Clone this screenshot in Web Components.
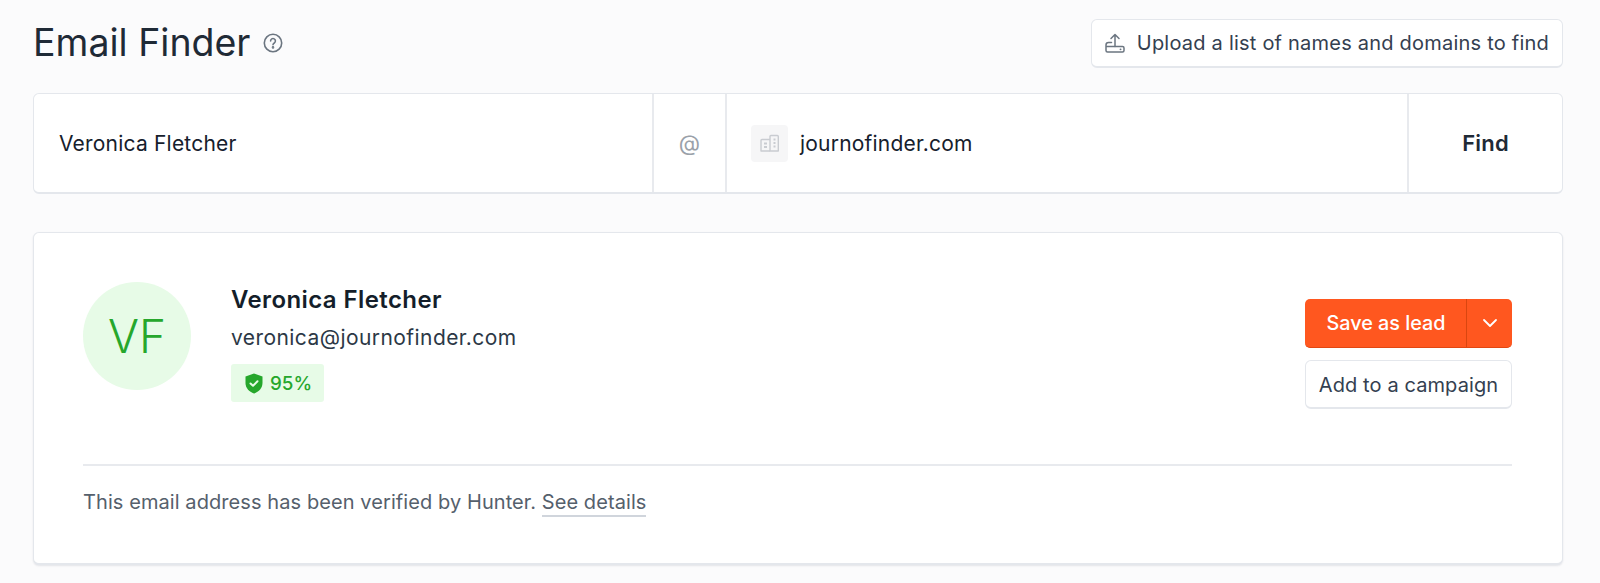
<!DOCTYPE html>
<html>
<head>
<meta charset="utf-8">
<style>
html, body { margin: 0; height: 583px; overflow: hidden; background: #fbfbfc; }
body { font-family: Inter, "Liberation Sans", sans-serif; color: #1f2a36; }
</style>
</head>
<body>
<finder-page>
    <finder-header></finder-header>
    <search-bar name="Veronica Fletcher" domain="journofinder.com"></search-bar>
    <result-card name="Veronica Fletcher" email="veronica@journofinder.com" initials="VF" score="95%"></result-card>
</finder-page>

<script>
class FinderPage extends HTMLElement {
    constructor() {
        super();
        this.attachShadow({ mode: "open" });
        this.shadowRoot.innerHTML = `
            <style>
                :host {
                    display: flex;
                    flex-direction: column;
                    box-sizing: border-box;
                    width: 1600px;
                    padding: 19px 37px 0 33px;
                }
            </style>
            <slot></slot>
        `;
    }
}

class FinderHeader extends HTMLElement {
    constructor() {
        super();
        this.attachShadow({ mode: "open" });
        this.shadowRoot.innerHTML = `
            <style>
                :host {
                    display: flex;
                    justify-content: space-between;
                    align-items: center;
                    height: 49px;
                    margin-bottom: 25px;
                }
                .title { display: flex; align-items: center; gap: 13px; margin-top: -2px; }
                h1 { margin: 0; font-size: 37.500px; font-weight: 400; line-height: 48px; color: #1f2a36; }
                .upload {
                    display: flex;
                    align-items: center;
                    gap: 12px;
                    box-sizing: border-box;
                    height: 49px;
                    padding: 0 13px;
                    background: #fff;
                    border: 1px solid #e4e7ec;
                    border-bottom-width: 2px;
                    border-radius: 6px;
                    font-size: 20px;
                    letter-spacing: 0.22px;
                    color: #344050;
                }
                svg { display: block; }
            </style>
            <div class="title">
                <h1>Email Finder</h1>
                <svg width="20" height="20" viewBox="0 0 20 20" fill="none" stroke="#6b7580" stroke-width="1.6" stroke-linecap="round">
                    <circle cx="10" cy="10" r="8.700"/>
                    <path d="M7.600 8a2.400 2.400 0 1 1 3.700 2c-.9.6-1.300 1-1.300 1.800"/>
                    <circle cx="10" cy="14.400" r=".5" fill="#6b7580"/>
                </svg>
            </div>
            <div class="upload">
                <svg width="20" height="21" viewBox="0 0 20 21" fill="none" stroke="#6b7580" stroke-width="1.5" stroke-linecap="round" stroke-linejoin="round">
                    <path d="M10 13.500V1.500M6 5.500l4-4 4 4"/>
                    <path d="M6.500 9.500H3.500A2.500 2.500 0 0 0 1 12v5.500A1.500 1.500 0 0 0 2.500 19h15a1.500 1.500 0 0 0 1.500-1.500v-2.500a1.500 1.500 0 0 0-1.500-1.500H1.500"/>
                    <path d="M15.500 16.300h.1" stroke-width="1.800"/>
                </svg>
                <span>Upload a list of names and domains to find</span>
            </div>
        `;
    }
}

class SearchBar extends HTMLElement {
    constructor() {
        super();
        this.attachShadow({ mode: "open" });
        this.shadowRoot.innerHTML = `
            <style>
                :host {
                    display: grid;
                    grid-template-columns: 618px 75px 1fr 155px;
                    box-sizing: border-box;
                    height: 101px;
                    margin-bottom: 38px;
                    background: #fff;
                    border: 1px solid #e4e7ec;
                    border-bottom-width: 2px;
                    border-radius: 6px;
                    font-size: 21px;
                    letter-spacing: 0.2px;
                    color: #16202c;
                }
                .cell { display: flex; align-items: center; }
                .name { padding-left: 25px; }
                .at {
                    justify-content: center;
                    border-left: 2px solid #e8eaee;
                    border-right: 2px solid #e8eaee;
                    color: #9aa1a9;
                    font-size: 22px;
                }
                .domain { padding-left: 24px; gap: 12px; }
                .icon {
                    display: flex;
                    align-items: center;
                    justify-content: center;
                    width: 37px;
                    height: 37px;
                    border-radius: 4px;
                    background: #f6f6f7;
                }
                .find {
                    justify-content: center;
                    border-left: 2px solid #e8eaee;
                    font-size: 22px;
                    font-weight: 600;
                    color: #1f2a36;
                }
            </style>
            <div class="cell name">${this.getAttribute("name")}</div>
            <div class="cell at">@</div>
            <div class="cell domain">
                <span class="icon">
                    <svg width="20" height="19" viewBox="0 0 20 19" fill="none" stroke="#c9ccd1" stroke-width="1.4" stroke-linejoin="round">
                        <path d="M10 5.500H2a1 1 0 0 0-1 1V17h9"/>
                        <path d="M10 17V2.500a1 1 0 0 1 1-1h6.300a1 1 0 0 1 1 1V17H10z"/>
                        <path d="M4 9.500h3M4 13h3M13.500 5.500h2M13.500 9h2M13.500 12.500h2" stroke-width="1.800"/>
                    </svg>
                </span>
                <span>${this.getAttribute("domain")}</span>
            </div>
            <div class="cell find">Find</div>
        `;
    }
}

class ResultCard extends HTMLElement {
    constructor() {
        super();
        this.attachShadow({ mode: "open" });
        this.shadowRoot.innerHTML = `
            <style>
                :host {
                    display: block;
                    box-sizing: border-box;
                    height: 333px;
                    padding: 49px 50px 0 49px;
                    background: #fff;
                    border: 1px solid #e4e7ec;
                    border-bottom-width: 2px;
                    border-radius: 6px;
                    box-shadow: 0 1px 2px rgba(20, 30, 60, 0.1);
                }
                .top {
                    display: flex;
                    align-items: flex-start;
                    height: 182px;
                    border-bottom: 2px solid #e8eaee;
                }
                .avatar {
                    display: flex;
                    align-items: center;
                    justify-content: center;
                    width: 108px;
                    height: 108px;
                    margin-right: 40px;
                    border-radius: 50%;
                    background: #e7fbe7;
                    color: #26a72c;
                    font-size: 46px;
                    font-weight: 300;
                }
                .info { flex: 1; }
                .name { font-size: 24px; font-weight: 600; line-height: 36px; color: #141e2a; letter-spacing: 0.4px; }
                .email { font-size: 21px; line-height: 40px; color: #2c3846; letter-spacing: 0.43px; }
                .badge {
                    display: inline-flex;
                    align-items: center;
                    gap: 6px;
                    box-sizing: border-box;
                    height: 38px;
                    margin-top: 6px;
                    padding: 0 12px 0 13px;
                    border-radius: 3px;
                    background: #e7fbe7;
                    color: #26a72c;
                    font-size: 18.800px;
                    font-weight: 500;
                }
                .actions { display: flex; flex-direction: column; gap: 12px; padding-top: 17px; width: 207px; }
                .save {
                    display: flex;
                    box-sizing: border-box;
                    height: 49px;
                    background: #ff571f;
                    border-bottom: 1px solid #e14712;
                    border-radius: 5px;
                    color: #fff;
                    font-size: 19.800px;
                    font-weight: 500;
                }
                .save span { display: flex; align-items: center; justify-content: center; }
                .save .label { width: 160px; padding-left: 1px; }
                .save .more { flex: 1; border-left: 1px solid #d94610; }
                .add {
                    display: flex;
                    align-items: center;
                    justify-content: center;
                    box-sizing: border-box;
                    height: 49px;
                    padding-top: 1px;
                    background: #fff;
                    border: 1px solid #e4e7ec;
                    border-bottom-width: 2px;
                    border-radius: 6px;
                    font-size: 20px;
                    letter-spacing: 0.1px;
                    white-space: nowrap;
                    color: #344050;
                }
                .note {
                    padding-top: 23px;
                    font-size: 20px;
                    line-height: 26px;
                    letter-spacing: 0.08px;
                    color: #55606c;
                }
                .note a { color: #55606c; text-decoration: none; border-bottom: 2px solid #d0d5dc; padding-bottom: 1px; }
                svg { display: block; }
            </style>
            <div class="top">
                <div class="avatar">${this.getAttribute("initials")}</div>
                <div class="info">
                    <div class="name">${this.getAttribute("name")}</div>
                    <div class="email">${this.getAttribute("email")}</div>
                    <div class="badge">
                        <svg width="20" height="21" viewBox="0 0 20 21">
                            <path fill="#26a72c" d="M10 .5l8.500 3v6.500c0 5-3.500 8.700-8.500 10.500C5 18.700 1.500 15 1.500 10V3.500z"/>
                            <path fill="none" stroke="#e7fbe7" stroke-width="2" stroke-linecap="round" stroke-linejoin="round" d="M6.500 10.500l2.500 2.300 4.500-4.500"/>
                        </svg>
                        <span>${this.getAttribute("score")}</span>
                    </div>
                </div>
                <div class="actions">
                    <div class="save">
                        <span class="label">Save as lead</span>
                        <span class="more">
                            <svg width="16" height="10" viewBox="0 0 16 10" fill="none" stroke="#fff" stroke-width="1.800" stroke-linecap="round" stroke-linejoin="round"><path d="M2 2l6 6 6-6"/></svg>
                        </span>
                    </div>
                    <div class="add">Add to a campaign</div>
                </div>
            </div>
            <div class="note">This email address has been verified by Hunter. <a href="#">See details</a></div>
        `;
    }
}

customElements.define("finder-page", FinderPage);
customElements.define("finder-header", FinderHeader);
customElements.define("search-bar", SearchBar);
customElements.define("result-card", ResultCard);
</script>
</body>
</html>
